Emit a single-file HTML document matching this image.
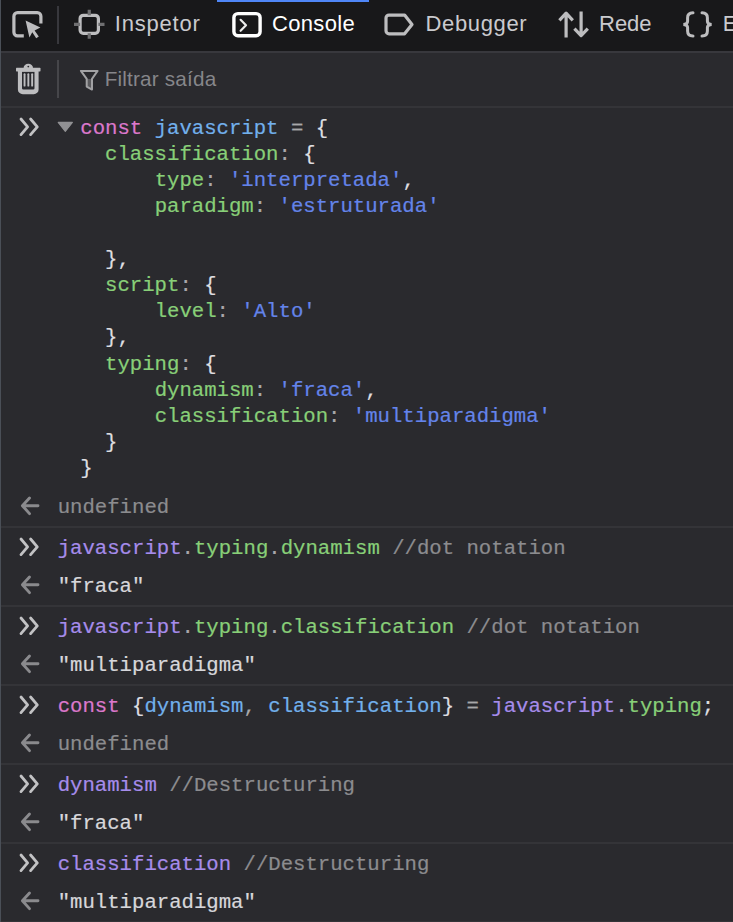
<!DOCTYPE html>
<html><head><meta charset="utf-8">
<style>
html,body{margin:0;padding:0}
body{width:733px;height:922px;background:#2a2a2e;position:relative;overflow:hidden;font-family:"Liberation Sans",sans-serif}
.abs{position:absolute}
#tb{left:0;top:0;width:733px;height:51px;background:#18181a}
#tbsep{left:0;top:51px;width:733px;height:2px;background:#38383d}
#fb{left:0;top:53px;width:733px;height:53px;background:#2a2a2e}
.sep{left:0;width:733px;height:2px;background:#343438}
#lb{left:0;top:0;width:1px;height:922px;background:#4a4f57;z-index:5}
.tab{position:absolute;top:0;height:50px;line-height:48px;font-size:22px;color:#cacace;white-space:nowrap}
.mono{position:absolute;font-family:"Liberation Mono",monospace;font-size:20.65px;line-height:26px;white-space:pre;color:#d7d7db;-webkit-text-stroke:0.2px currentColor}
.kw{color:#dc78cc}
.vb{color:#72b0ec}
.vp{color:#a68ceb}
.pr{color:#88cf78}
.st{color:#6484ea}
.gr{color:#8c8c8f}
.op{color:#a8a8aa}
.wh{color:#dedee0}
</style></head><body>
<div id="lb" class="abs"></div>
<div id="tb" class="abs"></div>
<div id="tbsep" class="abs"></div>
<div id="fb" class="abs"></div>
<div class="abs sep" style="top:105.5px"></div>

<!-- active tab highlight -->
<div class="abs" style="left:217px;top:0;width:152px;height:2px;background:#4f86f7"></div>

<!-- toolbar icons -->
<svg class="abs" style="left:0;top:0" width="733" height="50" viewBox="0 0 733 50">
  <g fill="none" stroke="#bdbdbf" stroke-width="3.2">
    <path d="M23.8 35.8 H17.5 a3.6 3.6 0 0 1 -3.6 -3.6 V16.3 a3.6 3.6 0 0 1 3.6 -3.6 H37.3 a3.6 3.6 0 0 1 3.6 3.6 V23.5"/>
    <rect x="80.1" y="15.3" width="18.3" height="18" rx="3.2"/>
    <path d="M89.25 9.8 V15.3 M89.25 33.3 V38.8 M74 24.3 H80.1 M98.4 24.3 H104.5" stroke="#6f6f71" stroke-width="3.2"/>
    <rect x="233.9" y="13.6" width="26.2" height="22.1" rx="4" stroke="#ffffff" stroke-width="3.4"/>
    <path d="M240.6 19.8 L246 25.3 L240.6 30.8" stroke="#ececec" stroke-width="2.2" stroke-linecap="round" stroke-linejoin="round"/>
    <path d="M404.6 15.1 H389 a3 3 0 0 0 -3 3 V30.8 a3 3 0 0 0 3 3 H404.6 L412 24.45 Z" stroke-linejoin="round"/>
    <path d="M566.1 37.4 V13 M559.4 20.3 L566.1 13.2 L572.8 20.3" stroke-linejoin="round"/>
    <path d="M581.1 11.4 V35.6 M574.4 28.6 L581.1 35.6 L587.8 28.6" stroke-linejoin="round"/>
    <path d="M693 12.8 Q687.6 12.8 687.6 17.8 V21.2 Q687.6 24.4 683.3 24.4 Q687.6 24.4 687.6 27.6 V31 Q687.6 36 693 36" stroke-width="3" stroke-linecap="round"/>
    <path d="M702 12.8 Q707.4 12.8 707.4 17.8 V21.2 Q707.4 24.4 711.7 24.4 Q707.4 24.4 707.4 27.6 V31 Q707.4 36 702 36" stroke-width="3" stroke-linecap="round"/>
  </g>
  <path fill="#bdbdbf" d="M25.6 20.6 L40.4 27.6 L34.6 30.4 L38.8 36.4 L36.2 38.2 L32.3 32.2 L29.4 37.6 Z"/>
</svg>

<div class="tab" style="left:114.8px;letter-spacing:0.8px">Inspetor</div>
<div class="tab" style="left:272px;letter-spacing:0.33px;color:#ffffff">Console</div>
<div class="tab" style="left:425.5px;letter-spacing:0.64px">Debugger</div>
<div class="tab" style="left:599px">Rede</div>
<div class="tab" style="left:722.8px">E</div>
<div class="abs" style="left:57.3px;top:5.5px;width:1.5px;height:38px;background:#38383d"></div>

<!-- filter bar -->
<svg class="abs" style="left:0;top:52px" width="733" height="54" viewBox="0 52 733 54">
  <g fill="#bdbdbf">
    <rect x="16" y="67.8" width="24.5" height="3.6" rx="0.6"/>
    <path d="M23.6 67.9 a4.7 4.1 0 0 1 9.4 0 Z M27.4 66.6 a0.9 0.9 0 1 0 1.8 0 a0.9 0.9 0 1 0 -1.8 0 Z" fill-rule="evenodd"/>
    <path d="M17.9 71 H38.6 V89.4 a4.9 4.9 0 0 1 -4.9 4.9 H22.8 a4.9 4.9 0 0 1 -4.9 -4.9 Z M22 71.8 V88.2 a1.4 1.4 0 0 0 1.4 1.4 H33.1 a1.4 1.4 0 0 0 1.4 -1.4 V71.8 Z" fill-rule="evenodd"/>
    <rect x="23.6" y="73.3" width="1.9" height="13.3" rx="0.9"/>
    <rect x="27.4" y="73.3" width="1.9" height="13.3" rx="0.9"/>
    <rect x="31.2" y="73.3" width="1.9" height="13.3" rx="0.9"/>
  </g>
  <path d="M86.7 79 H92 V89.4 L86.7 86.6 Z" fill="#5a5a5d"/>
  <path d="M80.9 70.9 H97.6 L92 78.8 V89.6 L86.7 86.6 V78.8 Z" fill="none" stroke="#a2a2a4" stroke-width="2" stroke-linejoin="round"/>
</svg>
<div class="abs" style="left:57.3px;top:60px;width:1.5px;height:37.5px;background:#46464a"></div>
<div class="tab" style="left:104.7px;letter-spacing:0.19px;top:52px;height:54px;line-height:54px;font-size:20.7px;color:#86868a">Filtrar saída</div>

<!--C-->
<div class="mono" style="left:80.30px;top:115.80px"><span class="kw">const</span> <span class="vb">javascript</span> <span class="op">=</span> <span class="wh">{</span></div>
<div class="mono" style="left:105.08px;top:142.00px"><span class="pr">classification</span><span class="op">:</span> <span class="wh">{</span></div>
<div class="mono" style="left:154.64px;top:168.20px"><span class="pr">type</span><span class="op">:</span> <span class="st">'interpretada'</span><span class="wh">,</span></div>
<div class="mono" style="left:154.64px;top:194.40px"><span class="pr">paradigm</span><span class="op">:</span> <span class="st">'estruturada'</span></div>
<div class="mono" style="left:105.08px;top:246.80px"><span class="wh">},</span></div>
<div class="mono" style="left:105.08px;top:273.00px"><span class="pr">script</span><span class="op">:</span> <span class="wh">{</span></div>
<div class="mono" style="left:154.64px;top:299.20px"><span class="pr">level</span><span class="op">:</span> <span class="st">'Alto'</span></div>
<div class="mono" style="left:105.08px;top:325.40px"><span class="wh">},</span></div>
<div class="mono" style="left:105.08px;top:351.60px"><span class="pr">typing</span><span class="op">:</span> <span class="wh">{</span></div>
<div class="mono" style="left:154.64px;top:377.80px"><span class="pr">dynamism</span><span class="op">:</span> <span class="st">'fraca'</span><span class="wh">,</span></div>
<div class="mono" style="left:154.64px;top:404.00px"><span class="pr">classification</span><span class="op">:</span> <span class="st">'multiparadigma'</span></div>
<div class="mono" style="left:105.08px;top:430.20px"><span class="wh">}</span></div>
<div class="mono" style="left:80.30px;top:456.40px"><span class="wh">}</span></div>
<svg class="abs" style="left:14px;top:109.80px" width="32" height="32" viewBox="0 0 32 32"><path d="M7 9 L13.6 16.8 L7 24.6 M16.6 9 L23.3 16.8 L16.6 24.6" fill="none" stroke="#c2c2c4" stroke-width="2.8" stroke-linecap="round" stroke-linejoin="round"/></svg>
<svg class="abs" style="left:56px;top:120px" width="18" height="14" viewBox="0 0 18 14"><path d="M2.2 2.4 H16.4 L9.3 11.4 Z" fill="#909093" stroke="#909093" stroke-width="1.1" stroke-linejoin="round"/></svg>
<svg class="abs" style="left:14px;top:488.80px" width="32" height="32" viewBox="0 0 32 32"><path d="M15.5 9 L8.4 16.7 L15.5 24.6 M8.8 16.7 H24" fill="none" stroke="#8a8a8d" stroke-width="2.9" stroke-linecap="round" stroke-linejoin="round"/></svg>
<div class="mono" style="left:57.70px;top:494.80px"><span class="gr">undefined</span></div>
<div class="abs sep" style="top:526px"></div>
<svg class="abs" style="left:14px;top:530.20px" width="32" height="32" viewBox="0 0 32 32"><path d="M7 9 L13.6 16.8 L7 24.6 M16.6 9 L23.3 16.8 L16.6 24.6" fill="none" stroke="#c2c2c4" stroke-width="2.8" stroke-linecap="round" stroke-linejoin="round"/></svg>
<div class="mono" style="left:57.70px;top:536.20px"><span class="vp">javascript</span><span class="op">.</span><span class="pr">typing</span><span class="op">.</span><span class="pr">dynamism</span> <span class="gr">//dot notation</span></div>
<svg class="abs" style="left:14px;top:568.00px" width="32" height="32" viewBox="0 0 32 32"><path d="M15.5 9 L8.4 16.7 L15.5 24.6 M8.8 16.7 H24" fill="none" stroke="#8a8a8d" stroke-width="2.9" stroke-linecap="round" stroke-linejoin="round"/></svg>
<div class="mono" style="left:57.70px;top:574.00px">"fraca"</div>
<div class="abs sep" style="top:605px"></div>
<svg class="abs" style="left:14px;top:609.20px" width="32" height="32" viewBox="0 0 32 32"><path d="M7 9 L13.6 16.8 L7 24.6 M16.6 9 L23.3 16.8 L16.6 24.6" fill="none" stroke="#c2c2c4" stroke-width="2.8" stroke-linecap="round" stroke-linejoin="round"/></svg>
<div class="mono" style="left:57.70px;top:615.20px"><span class="vp">javascript</span><span class="op">.</span><span class="pr">typing</span><span class="op">.</span><span class="pr">classification</span> <span class="gr">//dot notation</span></div>
<svg class="abs" style="left:14px;top:647.00px" width="32" height="32" viewBox="0 0 32 32"><path d="M15.5 9 L8.4 16.7 L15.5 24.6 M8.8 16.7 H24" fill="none" stroke="#8a8a8d" stroke-width="2.9" stroke-linecap="round" stroke-linejoin="round"/></svg>
<div class="mono" style="left:57.70px;top:653.00px">"multiparadigma"</div>
<div class="abs sep" style="top:684px"></div>
<svg class="abs" style="left:14px;top:688.20px" width="32" height="32" viewBox="0 0 32 32"><path d="M7 9 L13.6 16.8 L7 24.6 M16.6 9 L23.3 16.8 L16.6 24.6" fill="none" stroke="#c2c2c4" stroke-width="2.8" stroke-linecap="round" stroke-linejoin="round"/></svg>
<div class="mono" style="left:57.70px;top:694.20px"><span class="kw">const</span> <span class="wh">{</span><span class="vb">dynamism</span><span class="op">,</span> <span class="vb">classification</span><span class="wh">}</span> <span class="op">=</span> <span class="vp">javascript</span><span class="op">.</span><span class="pr">typing</span><span class="wh">;</span></div>
<svg class="abs" style="left:14px;top:726.00px" width="32" height="32" viewBox="0 0 32 32"><path d="M15.5 9 L8.4 16.7 L15.5 24.6 M8.8 16.7 H24" fill="none" stroke="#8a8a8d" stroke-width="2.9" stroke-linecap="round" stroke-linejoin="round"/></svg>
<div class="mono" style="left:57.70px;top:732.00px"><span class="gr">undefined</span></div>
<div class="abs sep" style="top:763px"></div>
<svg class="abs" style="left:14px;top:767.20px" width="32" height="32" viewBox="0 0 32 32"><path d="M7 9 L13.6 16.8 L7 24.6 M16.6 9 L23.3 16.8 L16.6 24.6" fill="none" stroke="#c2c2c4" stroke-width="2.8" stroke-linecap="round" stroke-linejoin="round"/></svg>
<div class="mono" style="left:57.70px;top:773.20px"><span class="vp">dynamism</span> <span class="gr">//Destructuring</span></div>
<svg class="abs" style="left:14px;top:805.00px" width="32" height="32" viewBox="0 0 32 32"><path d="M15.5 9 L8.4 16.7 L15.5 24.6 M8.8 16.7 H24" fill="none" stroke="#8a8a8d" stroke-width="2.9" stroke-linecap="round" stroke-linejoin="round"/></svg>
<div class="mono" style="left:57.70px;top:811.00px">"fraca"</div>
<div class="abs sep" style="top:842px"></div>
<svg class="abs" style="left:14px;top:846.20px" width="32" height="32" viewBox="0 0 32 32"><path d="M7 9 L13.6 16.8 L7 24.6 M16.6 9 L23.3 16.8 L16.6 24.6" fill="none" stroke="#c2c2c4" stroke-width="2.8" stroke-linecap="round" stroke-linejoin="round"/></svg>
<div class="mono" style="left:57.70px;top:852.20px"><span class="vp">classification</span> <span class="gr">//Destructuring</span></div>
<svg class="abs" style="left:14px;top:884.00px" width="32" height="32" viewBox="0 0 32 32"><path d="M15.5 9 L8.4 16.7 L15.5 24.6 M8.8 16.7 H24" fill="none" stroke="#8a8a8d" stroke-width="2.9" stroke-linecap="round" stroke-linejoin="round"/></svg>
<div class="mono" style="left:57.70px;top:890.00px">"multiparadigma"</div>
<div class="abs sep" style="top:921px"></div>
<!--/C-->
</body></html>
